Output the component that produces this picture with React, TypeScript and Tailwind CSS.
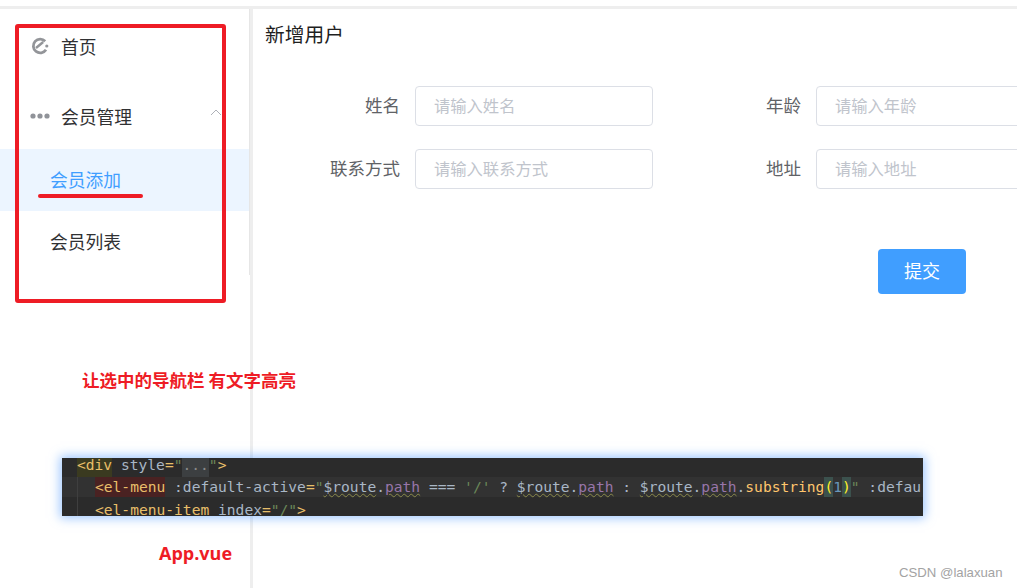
const sans = "font-['Noto_Sans_CJK_SC','Liberation_Sans',sans-serif]";
const squiggle = "underline decoration-wavy decoration-[#8a8a4a] decoration-1";

function Field({ label, placeholder, labelWidth }: { label: string; placeholder: string; labelWidth: string }) {
  return (
    <div className="flex items-start">
      <label className={`${labelWidth} text-right text-[17.5px] leading-[37px] text-[#606266] pr-[15px] shrink-0`}>{label}</label>
      <div className="w-[238px] h-[40px] shrink-0 rounded-[4px] border border-[#dcdfe6] bg-white pl-[18px] text-[16.3px] leading-[36px] text-[#c0c4cc]">
        {placeholder}
      </div>
    </div>
  );
}

function RoutePath() {
  return (
    <>
      <span className={squiggle}>$route</span>
      <span>.</span>
      <span className={`text-[#9876aa] ${squiggle}`}>path</span>
    </>
  );
}

function CodeBlock() {
  return (
    <div className="absolute left-[62px] top-[458px] w-[861px] h-[58px] overflow-hidden bg-[#2b2b2b] shadow-[0_0_10px_2px_rgba(90,160,255,0.6)] font-['DejaVu_Sans_Mono',monospace] text-[14.6px] whitespace-pre text-[#a9b7c6]">
      <div className="flex h-[19px] leading-[13px] pl-[15px]">
        <span className="bg-[#3a3a20] text-[#e8bf6a]">{"<div"}</span>
        <span>{" style"}</span>
        <span className="text-[#e8bf6a]">=</span>
        <span className="text-[#6a8759]">"</span>
        <span className="bg-[#3c3f41] text-[#888888]">...</span>
        <span className="text-[#6a8759]">"</span>
        <span className="text-[#e8bf6a]">{">"}</span>
      </div>
      <div className="h-[20px] bg-[#323232] pl-[16px]">
        <div className="flex h-full leading-[20px] pl-[17px] border-l border-[#3f3f3f] -ml-px">
          <span className="bg-[#4a2222] text-[#e8bf6a]">{"<el-menu"}</span>
          <span>{" :default-active"}</span>
          <span className="text-[#e8bf6a]">=</span>
          <span className="text-[#6a8759]">"</span>
          <RoutePath />
          <span>{" === "}</span>
          <span className="text-[#6a8759]">'/'</span>
          <span>{" ? "}</span>
          <RoutePath />
          <span>{" : "}</span>
          <RoutePath />
          <span>.</span>
          <span className="text-[#ffc66d]">substring</span>
          <span className="bg-[#3b514d] text-[#ffef28]">(</span>
          <span className="text-[#6897bb]">1</span>
          <span className="bg-[#3b514d] text-[#ffef28]">)</span>
          <span className="text-[#6a8759]">"</span>
          <span>{" :defau"}</span>
        </div>
      </div>
      <div className="h-[19px] pl-[16px]">
        <div className="flex h-full leading-[26px] pl-[17px] border-l border-[#3f3f3f] -ml-px">
          <span className="text-[#e8bf6a]">{"<el-menu-item"}</span>
          <span>{" index"}</span>
          <span className="text-[#e8bf6a]">=</span>
          <span className="text-[#6a8759]">"/"</span>
          <span className="text-[#e8bf6a]">{">"}</span>
        </div>
      </div>
    </div>
  );
}

export default function App() {
  return (
    <div className={`relative w-[1017px] h-[588px] overflow-hidden bg-white flex flex-col ${sans}`}>
      <div className="mt-[6px] h-[3px] shrink-0 bg-[#eeeeee]" />
      <div className="flex flex-1 min-h-0">
        {/* sidebar */}
        <aside className="w-[249px] shrink-0 h-[266px] text-[17.75px] text-[#303133]">
          <div className="h-[76px] flex items-center pl-[31px] pb-[2px]">
            <svg width="18" height="18" viewBox="0 0 18 18" className="mr-[12px]" fill="none">
              <path d="M14.2 4.2A6.9 6.9 0 1 0 15 12.8" stroke="#939599" strokeWidth="2.8" />
              <path d="M5 11 12.2 5" stroke="#939599" strokeWidth="2.4" />
              <circle cx="15.8" cy="9" r="1.6" fill="#939599" />
            </svg>
            首页
          </div>
          <div className="relative h-[64px] flex items-center pl-[30px] pb-[2px]">
            <svg width="20" height="6" viewBox="0 0 20 6" className="mr-[11px]" fill="#909399">
              <circle cx="3" cy="3" r="2.6" />
              <circle cx="10" cy="3" r="2.6" />
              <circle cx="17" cy="3" r="2.6" />
            </svg>
            会员管理
            <svg width="12" height="7" viewBox="0 0 12 7" className="absolute left-[210px] top-[24px]" fill="none">
              <path d="M1 6 6 1l5 5" stroke="#aeb1b8" strokeWidth="1" />
            </svg>
          </div>
          <div className="h-[62px] flex items-center pl-[50px] pb-[2px] bg-[#ecf5ff] text-[#409eff]">会员添加</div>
          <div className="h-[62px] flex items-center pl-[50px] pb-[2px]">会员列表</div>
        </aside>
        <div className="w-[1px] h-[266px] shrink-0 bg-[#e6e6e6]" />
        <div className="w-[3px] shrink-0 bg-[#eeeeee]" />
        {/* form */}
        <main className="flex-1 min-w-0 pl-[12px]">
          <h2 className="mt-[11px] text-[19.75px] leading-[28px] text-[#1f1f1f]">新增用户</h2>
          <div className="mt-[38px] flex flex-col gap-[23px] ml-[-12px]">
            <div className="flex">
              <Field label="姓名" placeholder="请输入姓名" labelWidth="w-[162px]" />
              <Field label="年龄" placeholder="请输入年龄" labelWidth="w-[163px]" />
            </div>
            <div className="flex">
              <Field label="联系方式" placeholder="请输入联系方式" labelWidth="w-[162px]" />
              <Field label="地址" placeholder="请输入地址" labelWidth="w-[163px]" />
            </div>
          </div>
          <button className="block mt-[60px] ml-[613px] w-[88px] h-[45px] pb-[2px] rounded-[4px] bg-[#409eff] text-[18px] text-white">提交</button>
        </main>
      </div>

      {/* annotations drawn on top of the screenshot */}
      <div className="absolute left-[15px] top-[24px] w-[211px] h-[279px] rounded-[3px] border-[4px] border-[#ee1c25]" />
      <div className="absolute left-[38px] top-[194px] w-[105px] h-[4px] rounded-full bg-[#ee1c25]" />
      <div className="absolute left-[82px] top-[368px] text-[17.5px] leading-[24px] font-bold text-[#ee1c25]">让选中的导航栏 有文字高亮</div>
      <CodeBlock />
      <div className="absolute left-[159px] top-[540px] text-[18px] leading-[26px] font-bold text-[#ee1c25] font-['Open_Sans',sans-serif]">App.vue</div>
      <div className="absolute left-[899px] top-[564px] text-[13.2px] leading-[18px] text-[#a3a3a3] font-['Liberation_Sans',sans-serif]">CSDN @lalaxuan</div>
    </div>
  );
}
